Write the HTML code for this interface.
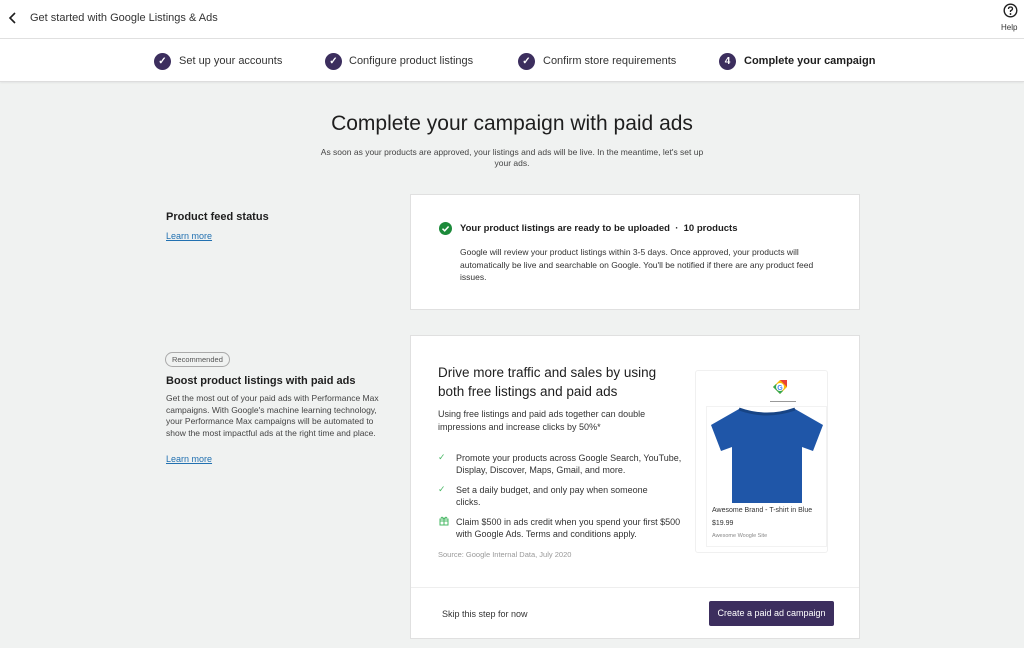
<!DOCTYPE html>
<html><head><meta charset="utf-8"><style>
*{box-sizing:border-box;margin:0;padding:0}
body{width:1024px;height:648px;overflow:hidden;background:#f0f2f1;font-family:"Liberation Sans",sans-serif;color:#1e1e1e;position:relative}
.abs{position:absolute}
.top{left:0;top:0;width:1024px;height:39px;background:#fff;border-bottom:1px solid #e0e0e0}
.steps{left:0;top:39px;width:1024px;height:43px;background:#fff;border-bottom:1px solid #ddd;box-shadow:0 1px 2px rgba(0,0,0,.06)}
.dot{position:absolute;width:17px;height:17px;border-radius:50%;background:#3c2e5e;color:#fff;font-size:10px;font-weight:bold;text-align:center;line-height:17px;top:14px}
.st{position:absolute;top:16px;font-size:11px;color:#333}
.card{background:#fff;border:1px solid #e0e0e0}
.lnk{font-size:9px;color:#2271b1;text-decoration:underline}
.li{font-size:9px;color:#333;line-height:12px}
</style></head><body>
<div class="abs top">
<svg class="abs" style="left:8px;top:12px" width="10" height="12"><path d="M7 1 L2 6 L7 11" stroke="#1e1e1e" stroke-width="1.6" fill="none"/></svg>
<div class="abs" style="left:30px;top:12px;font-size:11px;color:#333">Get started with Google Listings &amp; Ads</div>
<svg class="abs" style="left:1003px;top:3px" width="15" height="15"><circle cx="7.5" cy="7.5" r="6.3" stroke="#1e1e1e" stroke-width="1.4" fill="none"/><path d="M5.5 6 Q5.5 4 7.5 4 Q9.5 4 9.5 5.8 Q9.5 7 7.5 7.8 V9" stroke="#1e1e1e" stroke-width="1.3" fill="none"/><circle cx="7.5" cy="11" r=".9"/></svg>
<div class="abs" style="left:1001px;top:23px;font-size:8px;color:#333">Help</div>
</div>
<div class="abs steps">
<div class="dot" style="left:154px">✓</div><div class="st" style="left:179px">Set up your accounts</div>
<div class="dot" style="left:325px">✓</div><div class="st" style="left:349px">Configure product listings</div>
<div class="dot" style="left:518px">✓</div><div class="st" style="left:543px">Confirm store requirements</div>
<div class="dot" style="left:719px">4</div><div class="st" style="left:744px;font-weight:bold;color:#1e1e1e">Complete your campaign</div>
</div>
<div class="abs" style="left:0;width:1024px;top:112px;text-align:center;font-size:21px;color:#1e1e1e">Complete your campaign with paid ads</div>
<div class="abs" style="left:312px;width:400px;top:147px;text-align:center;font-size:8.5px;line-height:11px;color:#444">As soon as your products are approved, your listings and ads will be live. In the meantime, let's set up your ads.</div>

<div class="abs" style="left:166px;top:211px;font-size:11px;font-weight:bold">Product feed status</div>
<div class="abs lnk" style="left:166px;top:231px">Learn more</div>
<div class="abs card" style="left:410px;top:194px;width:450px;height:116px">
<svg class="abs" style="left:28px;top:27px" width="13" height="13"><circle cx="6.5" cy="6.5" r="6.5" fill="#1c8a3a"/><path d="M3.5 6.7 L5.7 8.8 L9.6 4.5" stroke="#fff" stroke-width="1.5" fill="none"/></svg>
<div class="abs" style="left:49px;top:28px;font-size:9.5px;font-weight:bold">Your product listings are ready to be uploaded &nbsp;·&nbsp; 10 products</div>
<div class="abs" style="left:49px;top:51px;width:375px;font-size:8.5px;line-height:12.5px;color:#333">Google will review your product listings within 3-5 days. Once approved, your products will automatically be live and searchable on Google. You'll be notified if there are any product feed issues.</div>
</div>

<div class="abs" style="left:165px;top:352px;border:1px solid #aaa;border-radius:8px;font-size:7.5px;color:#555;padding:2px 6px">Recommended</div>
<div class="abs" style="left:166px;top:375px;font-size:11px;font-weight:bold">Boost product listings with paid ads</div>
<div class="abs" style="left:166px;top:393px;width:215px;font-size:8.5px;line-height:11.5px;color:#444">Get the most out of your paid ads with Performance Max campaigns. With Google's machine learning technology, your Performance Max campaigns will be automated to show the most impactful ads at the right time and place.</div>
<div class="abs lnk" style="left:166px;top:454px">Learn more</div>

<div class="abs card" style="left:410px;top:335px;width:450px;height:304px">
<div class="abs" style="left:27px;top:27px;width:240px;font-size:13.5px;line-height:19px">Drive more traffic and sales by using both free listings and paid ads</div>
<div class="abs" style="left:27px;top:72px;width:235px;font-size:9px;line-height:13px;color:#333">Using free listings and paid ads together can double impressions and increase clicks by 50%*</div>
<div class="abs" style="left:27px;top:116px;color:#4ab866;font-size:9px">✓</div>
<div class="abs li" style="left:45px;top:116px;width:228px">Promote your products across Google Search, YouTube, Display, Discover, Maps, Gmail, and more.</div>
<div class="abs" style="left:27px;top:148px;color:#4ab866;font-size:9px">✓</div>
<div class="abs li" style="left:45px;top:148px;width:215px">Set a daily budget, and only pay when someone clicks.</div>
<svg class="abs" style="left:28px;top:180px" width="10" height="10"><rect x="1" y="3" width="8" height="6" fill="none" stroke="#4ab866"/><path d="M5 3V9M1 5H9M5 3 Q3 0 2 2 M5 3 Q7 0 8 2" stroke="#4ab866" fill="none"/></svg>
<div class="abs li" style="left:45px;top:180px;width:230px">Claim $500 in ads credit when you spend your first $500 with Google Ads. Terms and conditions apply.</div>
<div class="abs" style="left:27px;top:214px;font-size:7.5px;color:#999">Source: Google Internal Data, July 2020</div>
<div class="abs" style="left:284px;top:34px;width:133px;height:183px;border:1px solid #f0f0f0;border-radius:3px">
<svg class="abs" style="left:74px;top:6px" width="20" height="20"><path d="M3 10 L10 3 L17 3 L17 10 L10 17Z" fill="#fbbc05"/><path d="M10 3 L17 3 L17 10Z" fill="#ea4335"/><path d="M3 10 L10 17 L13 14 L6 7Z" fill="#34a853"/><circle cx="10" cy="10" r="4" fill="#fff"/><text x="7.3" y="13" font-size="7" font-weight="bold" fill="#4285f4" font-family="Liberation Sans">G</text></svg>
<div class="abs" style="left:74px;top:30px;width:26px;height:1px;background:#999"></div>
<div class="abs" style="left:10px;top:35px;width:121px;height:141px;border:1px solid #f2f2f2">
<svg class="abs" style="left:2px;top:0" width="116" height="96"><path d="M30 2 Q58 10 86 2 L114 18 L104 44 L93 40 L93 96 L23 96 L23 40 L12 44 L2 18Z" fill="#1f56a8"/><path d="M30 2 Q58 12 86 2" stroke="#174485" stroke-width="3" fill="none"/></svg>
<div class="abs" style="left:5px;top:100px;font-size:7px;color:#333">Awesome Brand - T-shirt in Blue</div>
<div class="abs" style="left:5px;top:113px;font-size:7px;color:#333">$19.99</div>
<div class="abs" style="left:5px;top:126px;font-size:5.5px;color:#888">Awesome Woogle Site</div>
</div>
</div>
<div class="abs" style="left:0;top:251px;width:448px;height:1px;background:#eee"></div>
<div class="abs" style="left:31px;top:273px;font-size:9px;color:#333">Skip this step for now</div>
<div class="abs" style="left:298px;top:265px;width:125px;height:25px;background:#3c2e5e;border-radius:2px;color:#fff;font-size:9px;text-align:center;line-height:25px">Create a paid ad campaign</div>
</div>
</body></html>
